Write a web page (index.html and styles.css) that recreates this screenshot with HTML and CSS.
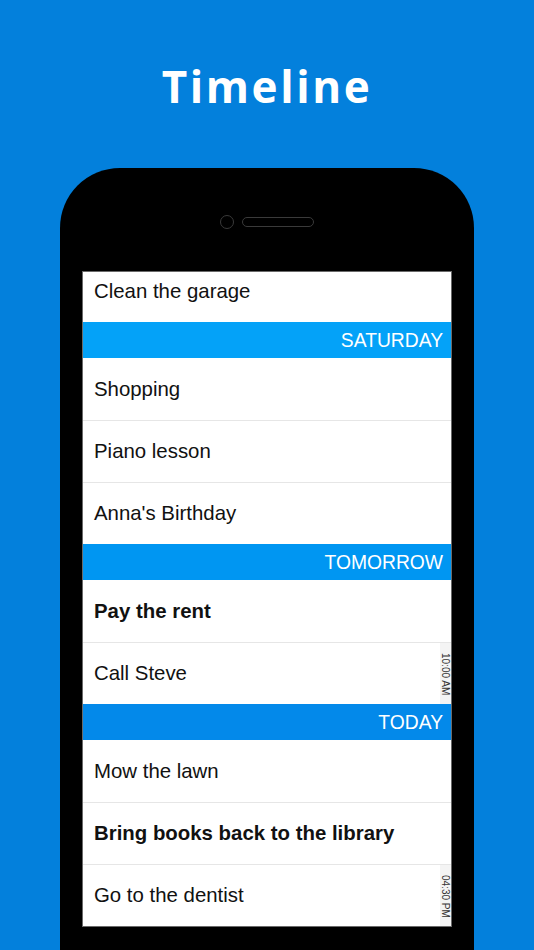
FILE: index.html
```html
<!DOCTYPE html>
<html>
<head>
<meta charset="utf-8">
<link rel="stylesheet" href="styles.css">
</head>
<body>
<header class="hero"><h1 class="title">Timeline</h1></header>
<div class="phone">
  <div class="sensors">
    <span class="camera"></span>
    <span class="speaker"></span>
  </div>
  <div class="screen">
    <div class="row first"><span class="label">Clean the garage</span></div>
    <div class="day sat">SATURDAY</div>
    <div class="row"><span class="label">Shopping</span></div>
    <div class="row sep"><span class="label">Piano lesson</span></div>
    <div class="row sep"><span class="label">Anna's Birthday</span></div>
    <div class="day tom">TOMORROW</div>
    <div class="row"><span class="label bold">Pay the rent</span></div>
    <div class="row sep"><span class="label">Call Steve</span><span class="time"><span class="time-text">10:00 AM</span></span></div>
    <div class="day today">TODAY</div>
    <div class="row"><span class="label">Mow the lawn</span></div>
    <div class="row sep"><span class="label bold">Bring books back to the library</span></div>
    <div class="row sep"><span class="label">Go to the dentist</span><span class="time"><span class="time-text">04:30 PM</span></span></div>
  </div>
</div>
</body>
</html>
```
FILE: styles.css
```css
html, body {
  margin: 0;
  padding: 0;
}
body {
  background: #0380dc;
  width: 534px;
  height: 950px;
  overflow: hidden;
  font-family: "Liberation Sans", Arial, sans-serif;
}
.hero {
  height: 168px;
  display: flex;
  justify-content: center;
}
.title {
  margin: 56px 0 0;
  font-family: "Open Sans", sans-serif;
  font-weight: 700;
  font-size: 44px;
  line-height: 60px;
  letter-spacing: 2.6px;
  color: #fff;
  height: 60px;
}
.phone {
  margin: 0 60px;
  width: 414px;
  height: 800px;
  background: #000;
  border-radius: 60px 60px 0 0;
  box-sizing: border-box;
  padding: 0 23px;
}
.sensors {
  height: 104px;
  box-sizing: border-box;
  padding-top: 3px;
  display: flex;
  justify-content: center;
  align-items: center;
  gap: 8px;
}
.camera {
  width: 12px;
  height: 12px;
  border: 1.5px solid #3a3a3a;
  border-radius: 50%;
}
.speaker {
  width: 70px;
  height: 8px;
  border: 1.5px solid #3a3a3a;
  border-radius: 6px;
}
.screen {
  width: 368px;
  background: #fff;
  box-shadow: 0 0 0 1px #6a6a6a;
  display: flex;
  flex-direction: column;
}
.row {
  height: 62px;
  display: flex;
  align-items: center;
  box-sizing: border-box;
  padding-left: 11px;
  position: relative;
}
.row.first {
  height: 50px;
  padding-bottom: 12px;
}
.row.sep {
  border-top: 1px solid #e6e6e6;
}
.label {
  font-size: 20.4px;
  color: #111;
  flex: 1;
}
.label.bold {
  font-weight: 700;
}
.day {
  height: 36px;
  display: flex;
  align-items: center;
  justify-content: flex-end;
  padding-right: 8px;
  padding-top: 2px;
  box-sizing: border-box;
  color: #fff;
  font-size: 19.3px;
}
.day.sat { background: #04a2f8; }
.day.tom { background: #0096f2; }
.day.today { background: #0389ea; }
.time {
  align-self: stretch;
  width: 11px;
  background: #f4f4f4;
  position: relative;
}
.time-text {
  position: absolute;
  left: 11px;
  top: 10px;
  transform-origin: 0 0;
  transform: rotate(90deg);
  font-size: 10px;
  line-height: 11px;
  white-space: nowrap;
  color: #333;
}
```
